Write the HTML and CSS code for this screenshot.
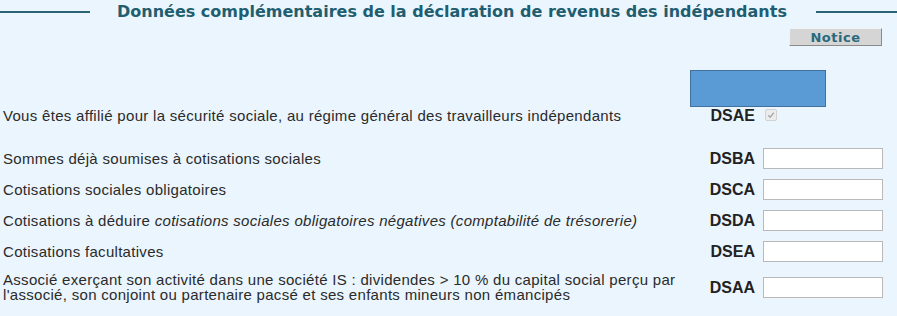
FILE: index.html
```html
<!DOCTYPE html>
<html lang="fr">
<head>
<meta charset="utf-8">
<title>Données complémentaires</title>
<link rel="stylesheet" href="styles.css">
</head>
<body>
<div class="page">
  <div class="heading">
    <span class="rule rule-left"></span>
    <h1 class="title">Données complémentaires de la déclaration de revenus des indépendants</h1>
    <span class="rule rule-right"></span>
  </div>
  <div class="toolbar">
    <button class="notice" type="button">Notice</button>
  </div>
  <div class="form">
    <div class="mask"></div>
    <div class="row row-first">
      <div class="label">Vous êtes affilié pour la sécurité sociale, au régime général des travailleurs indépendants</div>
      <div class="code">DSAE</div>
      <div class="field"><span class="check"><svg viewBox="0 0 10 10" width="10" height="10"><path d="M2.2 5.2 L4.2 7.2 L7.8 2.8" fill="none" stroke="#a9a9a9" stroke-width="1.4"/></svg></span></div>
    </div>
    <div class="row">
      <div class="label">Sommes déjà soumises à cotisations sociales</div>
      <div class="code">DSBA</div>
      <div class="field"><input class="input" type="text"></div>
    </div>
    <div class="row">
      <div class="label">Cotisations sociales obligatoires</div>
      <div class="code">DSCA</div>
      <div class="field"><input class="input" type="text"></div>
    </div>
    <div class="row">
      <div class="label">Cotisations à déduire <em>cotisations sociales obligatoires négatives (comptabilité de trésorerie)</em></div>
      <div class="code">DSDA</div>
      <div class="field"><input class="input" type="text"></div>
    </div>
    <div class="row">
      <div class="label">Cotisations facultatives</div>
      <div class="code">DSEA</div>
      <div class="field"><input class="input" type="text"></div>
    </div>
    <div class="row row-last">
      <div class="label">Associé exerçant son activité dans une société IS : dividendes &gt; 10 % du capital social perçu par l'associé, son conjoint ou partenaire pacsé et ses enfants mineurs non émancipés</div>
      <div class="code">DSAA</div>
      <div class="field"><input class="input" type="text"></div>
    </div>
  </div>
</div>
</body>
</html>
```

FILE: styles.css
```css
html, body {
  margin: 0;
  padding: 0;
  background: #eaf5fd;
}
.page {
  width: 897px;
  height: 316px;
  overflow: hidden;
  font-family: "Liberation Sans", Arial, sans-serif;
  color: #2b2b2b;
}
.heading {
  display: flex;
  align-items: center;
  height: 24px;
}
.rule {
  display: block;
  height: 2px;
  background: #2a6477;
}
.rule-left {
  width: 90px;
  margin-right: 27px;
}
.rule-right {
  flex: 1;
  margin-left: 29px;
}
.title {
  margin: 0;
  font-family: "DejaVu Sans", Verdana, sans-serif;
  font-weight: bold;
  font-size: 16px;
  line-height: 24px;
  color: #1f5e70;
  white-space: nowrap;
}
.toolbar {
  display: flex;
  justify-content: flex-end;
  padding: 4px 15px 0 0;
}
.notice {
  width: 93px;
  height: 18px;
  padding: 0;
  background: #d5d5d5;
  border: 1px solid;
  border-color: #f2f2f2 #8a8a8a #8a8a8a #f2f2f2;
  font-family: "DejaVu Sans", Verdana, sans-serif;
  font-weight: bold;
  font-size: 13px;
  letter-spacing: 0.5px;
  color: #2b6a7c;
}
.form {
  position: relative;
  padding-top: 59px;
  display: flex;
  flex-direction: column;
  gap: 10px;
}
.mask {
  position: absolute;
  left: 690px;
  top: 24px;
  width: 134px;
  height: 35px;
  background: #5b9bd5;
  border: 1.5px solid #41719c;
}
.row {
  display: grid;
  grid-template-columns: 1fr 60px 120px;
  column-gap: 8px;
  align-items: center;
  padding: 0 14px 0 3px;
  min-height: 21px;
  font-size: 15px;
  letter-spacing: 0.3px;
  line-height: 15px;
}
.row-first {
  margin-bottom: 12px;
}
.label {
  padding-right: 8px;
}
.code {
  text-align: right;
  font-weight: bold;
  font-size: 16px;
  letter-spacing: 0;
  color: #222;
}
.field {
  display: flex;
  align-items: center;
}
.input {
  box-sizing: border-box;
  width: 120px;
  height: 21px;
  margin: 0;
  background: #fff;
  border: 1px solid #b9b9b9;
}
.check {
  display: block;
  width: 10px;
  height: 10px;
  margin-left: 2px;
  background: #ececec;
  border: 1px solid #d2d2d2;
  border-radius: 2px;
  margin-top: -2px;
}
.check svg {
  display: block;
}
```
